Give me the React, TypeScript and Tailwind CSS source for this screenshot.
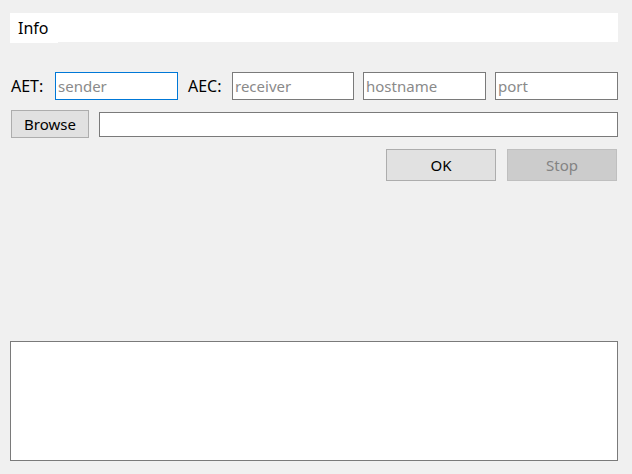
import { useState } from "react";

const font = { fontFamily: '"Segoe UI", "Noto Sans", "Open Sans", sans-serif' };

const Field = ({ placeholder, focused = false, width }: { placeholder: string; focused?: boolean; width: string }) => (
  <input
    placeholder={placeholder}
    autoFocus={focused}
    className={`${width} h-[28px] bg-white px-[2px] text-[15px] text-black outline-none placeholder:text-[#8a8a8a] border ${
      focused ? "border-[#0078d7]" : "border-[#7a7a7a]"
    }`}
  />
);

export default function App() {
  const [path, setPath] = useState("");

  return (
    <div className="w-[632px] h-[474px] bg-[#f0f0f0] flex flex-col text-[15px] text-black" style={font}>
      {/* tab bar */}
      <div className="mt-[13px] ml-[10px] mr-[14px] h-[29px] bg-white relative">
        <div className="absolute left-0 top-0 w-[48px] h-[30px] bg-white pl-[8px] pt-[5px] text-[16px] leading-[20px]">Info</div>
      </div>

      {/* connection row */}
      <div className="mt-[30px] flex items-center h-[28px] pl-[11px]">
        <span className="w-[44px] text-[16px]">AET:</span>
        <Field placeholder="sender" focused width="w-[123px]" />
        <span className="ml-[10px] w-[44px] text-[16px]">AEC:</span>
        <Field placeholder="receiver" width="w-[122px]" />
        <div className="ml-[9px]">
          <Field placeholder="hostname" width="w-[123px]" />
        </div>
        <div className="ml-[9px]">
          <Field placeholder="port" width="w-[123px]" />
        </div>
      </div>

      {/* browse row */}
      <div className="mt-[10px] flex items-center h-[28px] pl-[11px]">
        <button className="w-[78px] h-[28px] bg-[#e1e1e1] border border-[#adadad]">Browse</button>
        <input
          value={path}
          onChange={(e) => setPath(e.target.value)}
          className="ml-[10px] w-[519px] h-[25px] bg-white border border-[#7a7a7a] outline-none px-[2px]"
        />
      </div>

      {/* actions */}
      <div className="mt-[11px] flex justify-end gap-[11px] pr-[15px]">
        <button className="w-[110px] h-[32px] bg-[#e1e1e1] border border-[#adadad]">OK</button>
        <button disabled className="w-[110px] h-[32px] bg-[#cccccc] border border-[#bfbfbf] text-[#838383]">
          Stop
        </button>
      </div>

      {/* log */}
      <textarea
        readOnly
        className="mt-[160px] ml-[10px] w-[608px] h-[120px] bg-white border border-[#7a7a7a] outline-none resize-none"
      />
    </div>
  );
}
